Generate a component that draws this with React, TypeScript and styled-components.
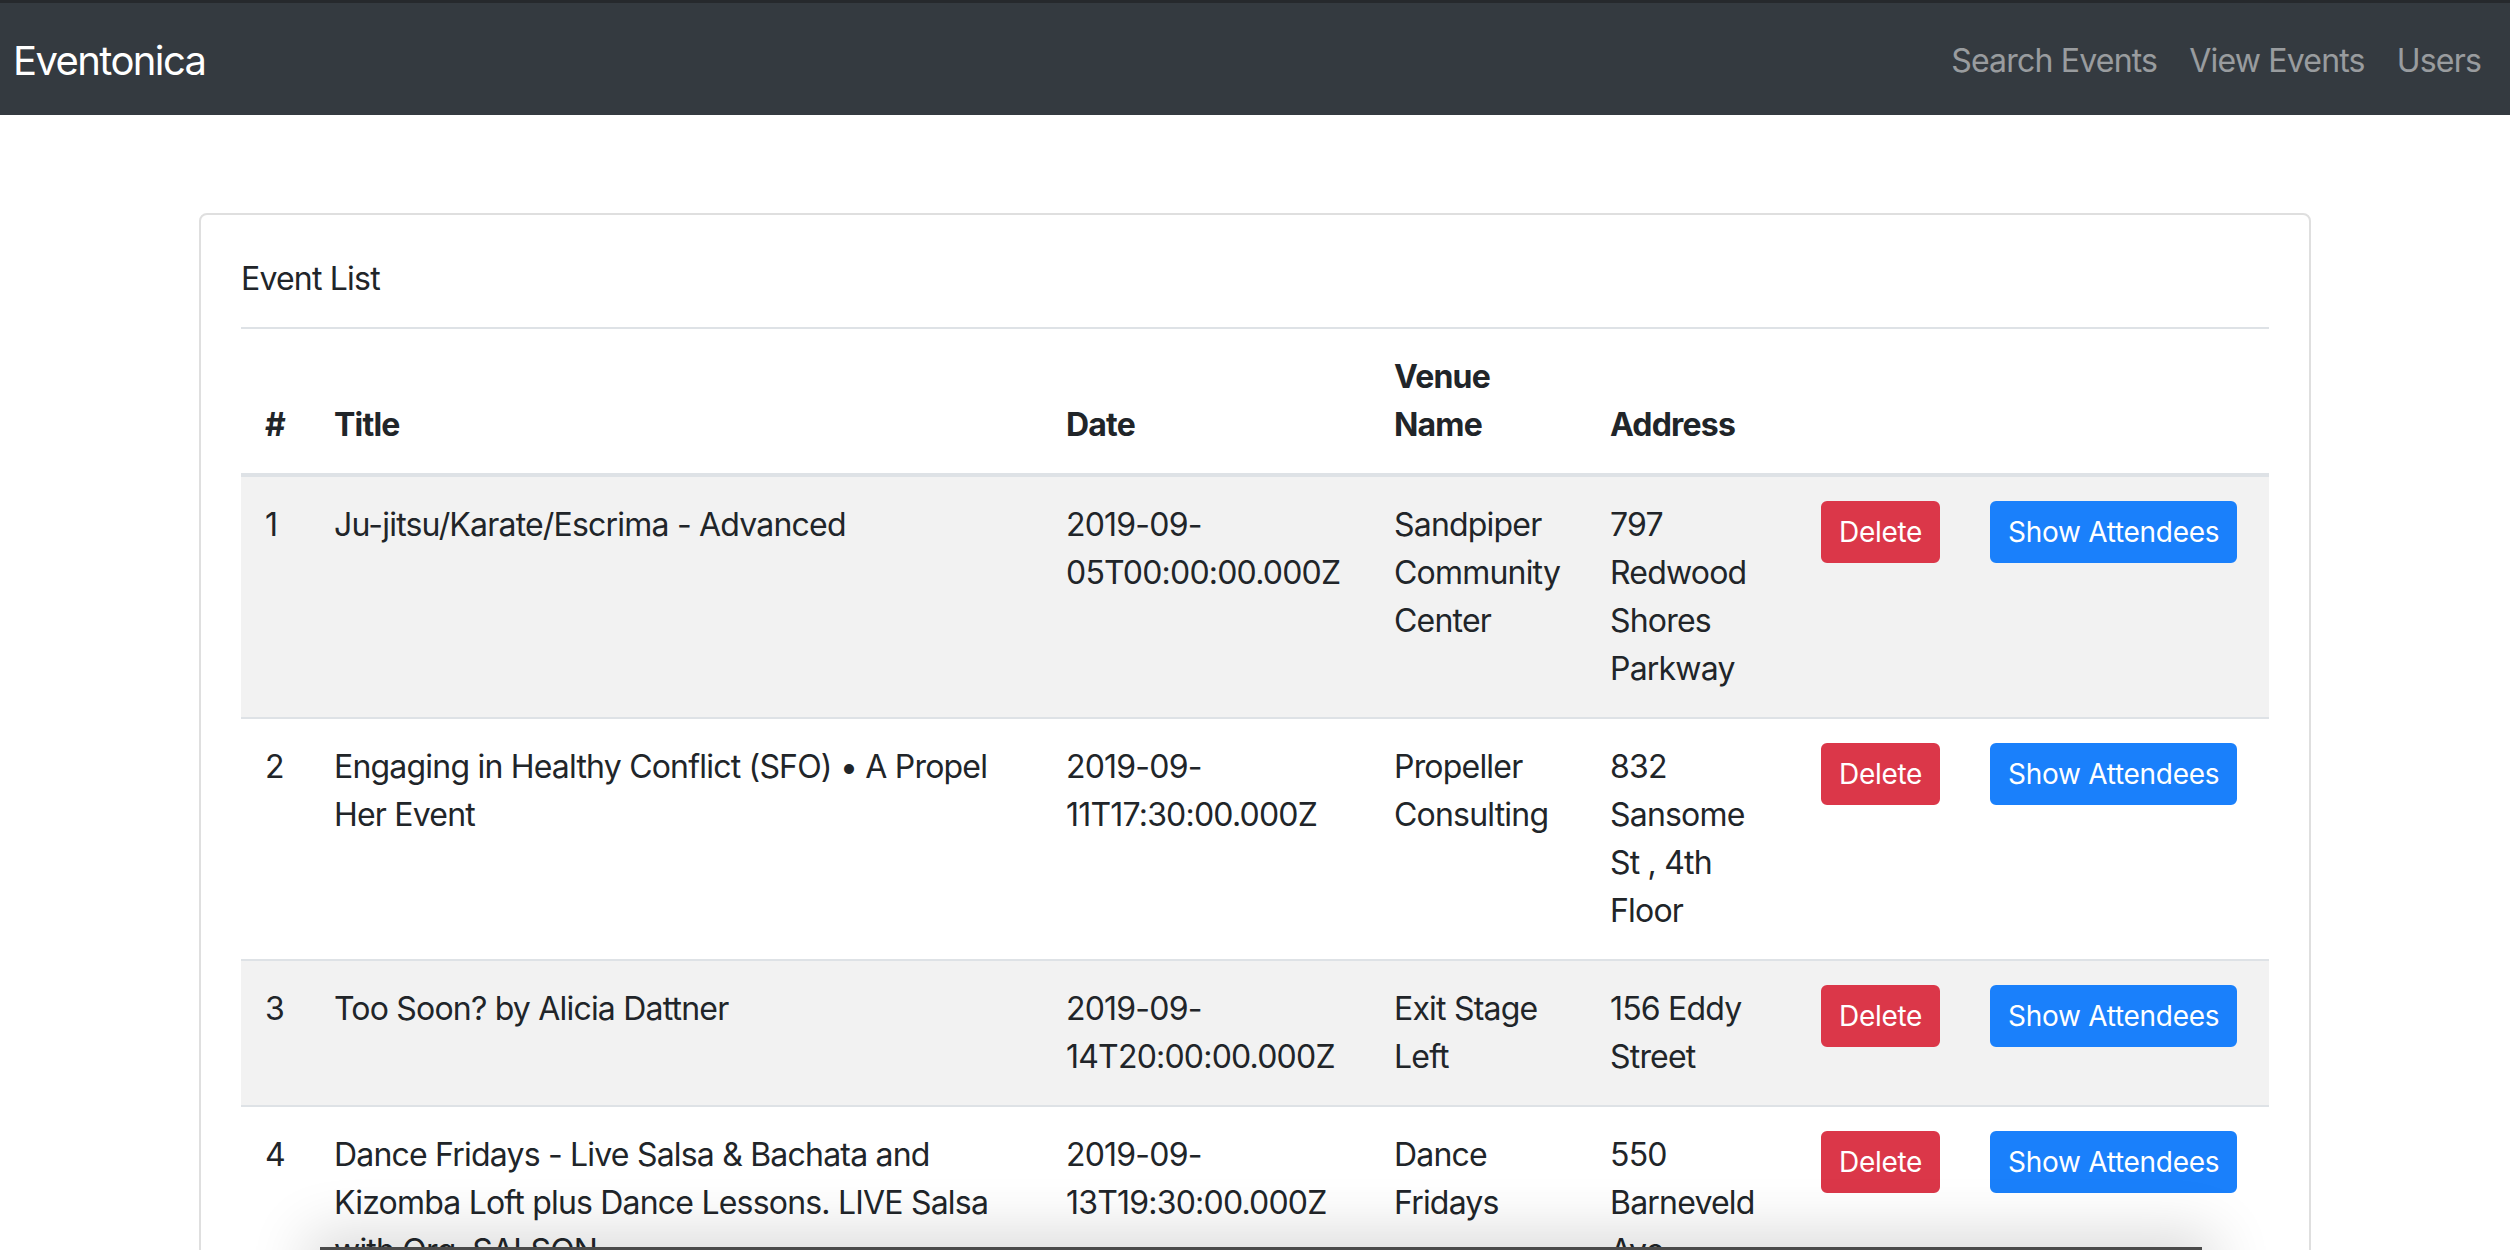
import React from "react";
import styled, { createGlobalStyle } from "styled-components";

interface IEvent {
  id: number;
  title: string;
  date: string;
  venue: string;
  address: string;
}

const events: IEvent[] = [
  {
    id: 1,
    title: "Ju-jitsu/Karate/Escrima - Advanced",
    date: "2019-09-05T00:00:00.000Z",
    venue: "Sandpiper Community Center",
    address: "797 Redwood Shores Parkway",
  },
  {
    id: 2,
    title: "Engaging in Healthy Conflict (SFO) • A Propel Her Event",
    date: "2019-09-11T17:30:00.000Z",
    venue: "Propeller Consulting",
    address: "832 Sansome St , 4th Floor",
  },
  {
    id: 3,
    title: "Too Soon? by Alicia Dattner",
    date: "2019-09-14T20:00:00.000Z",
    venue: "Exit Stage Left",
    address: "156 Eddy Street",
  },
  {
    id: 4,
    title:
      "Dance Fridays - Live Salsa & Bachata and Kizomba Loft plus Dance Lessons. LIVE Salsa with Org. SALSON",
    date: "2019-09-13T19:30:00.000Z",
    venue: "Dance Fridays",
    address: "550 Barneveld Ave",
  },
];

// column widths of the event table, left to right
const columns = [69, 732, 328, 216, 211, 169, 303];

const App = () => {
  return (
    <>
      <GlobalStyle />
      <Navbar>
        <Brand href="#">Eventonica</Brand>
        <NavLinks>
          <NavLink href="#">Search Events</NavLink>
          <NavLink href="#">View Events</NavLink>
          <NavLink href="#">Users</NavLink>
        </NavLinks>
      </Navbar>
      <Card>
        <CardTitle>Event List</CardTitle>
        <Table>
          <colgroup>
            {columns.map((w, i) => (
              <col key={i} style={{ width: w }} />
            ))}
          </colgroup>
          <thead>
            <tr>
              <Th>#</Th>
              <Th>Title</Th>
              <Th>Date</Th>
              <Th>Venue Name</Th>
              <Th>Address</Th>
              <Th />
              <Th />
            </tr>
          </thead>
          <tbody>
            {events.map((event) => (
              <Row key={event.id}>
                <Td>{event.id}</Td>
                <Td>{event.title}</Td>
                <Td>{event.date}</Td>
                <Td>{event.venue}</Td>
                <Td>{event.address}</Td>
                <Td>
                  <Button $variant="danger">Delete</Button>
                </Td>
                <Td>
                  <Button $variant="primary">Show Attendees</Button>
                </Td>
              </Row>
            ))}
          </tbody>
        </Table>
      </Card>
      <WindowEdge />
    </>
  );
};

export default App;

const GlobalStyle = createGlobalStyle`
  * {
    box-sizing: border-box;
  }

  html,
  body {
    margin: 0;
    padding: 0;
    background: #fff;
  }

  body {
    font-family: Inter, "Liberation Sans", sans-serif;
    font-size: 32px;
    line-height: 48px;
    letter-spacing: -0.025em;
    color: #212529;
  }
`;

const Navbar = styled.nav`
  height: 115px;
  border-top: 3px solid #26292d;
  background: #343a40;
  display: flex;
  align-items: center;
  justify-content: space-between;
  padding: 4px 13px 0;
`;

const Brand = styled.a`
  font-size: 40px;
  line-height: 60px;
  letter-spacing: -0.04em;
  color: #fff;
  text-decoration: none;
`;

const NavLinks = styled.div`
  display: flex;
`;

const NavLink = styled.a`
  padding: 0 16px;
  font-size: 32px;
  color: rgba(255, 255, 255, 0.5);
  text-decoration: none;
`;

const Card = styled.section`
  width: 2112px;
  margin: 98px auto 0;
  border: 2px solid #dfdfdf;
  border-radius: 8px;
  padding: 40px;
`;

const CardTitle = styled.div`
  margin-bottom: 24px;
`;

const Table = styled.table`
  width: 100%;
  border-collapse: collapse;
  table-layout: fixed;
`;

const Th = styled.th`
  padding: 24px;
  border-top: 2px solid #dee2e6;
  border-bottom: 4px solid #dee2e6;
  vertical-align: bottom;
  text-align: left;
  font-weight: 700;
`;

const Row = styled.tr`
  &:nth-child(odd) {
    background: #f2f2f2;
  }
`;

const Td = styled.td`
  padding: 24px;
  border-top: 2px solid #dee2e6;
  vertical-align: top;
`;

const Button = styled.button<{ $variant: "danger" | "primary" }>`
  display: inline-block;
  vertical-align: top;
  font-family: inherit;
  font-size: 28px;
  line-height: 42px;
  letter-spacing: -0.01em;
  padding: 8px 16px;
  border: 2px solid
    ${({ $variant }) => ($variant === "danger" ? "#db3749" : "#1a80fb")};
  border-radius: 6px;
  background: ${({ $variant }) =>
    $variant === "danger" ? "#db3749" : "#1a80fb"};
  color: #fff;
  white-space: nowrap;
  cursor: pointer;
`;

// edge of another window lying over the bottom of the page
const WindowEdge = styled.div`
  position: fixed;
  left: 320px;
  top: 1247px;
  width: 1882px;
  height: 40px;
  background: #4a4a4a;
  box-shadow: 0 0 60px 12px rgba(0, 0, 0, 0.16);
`;
